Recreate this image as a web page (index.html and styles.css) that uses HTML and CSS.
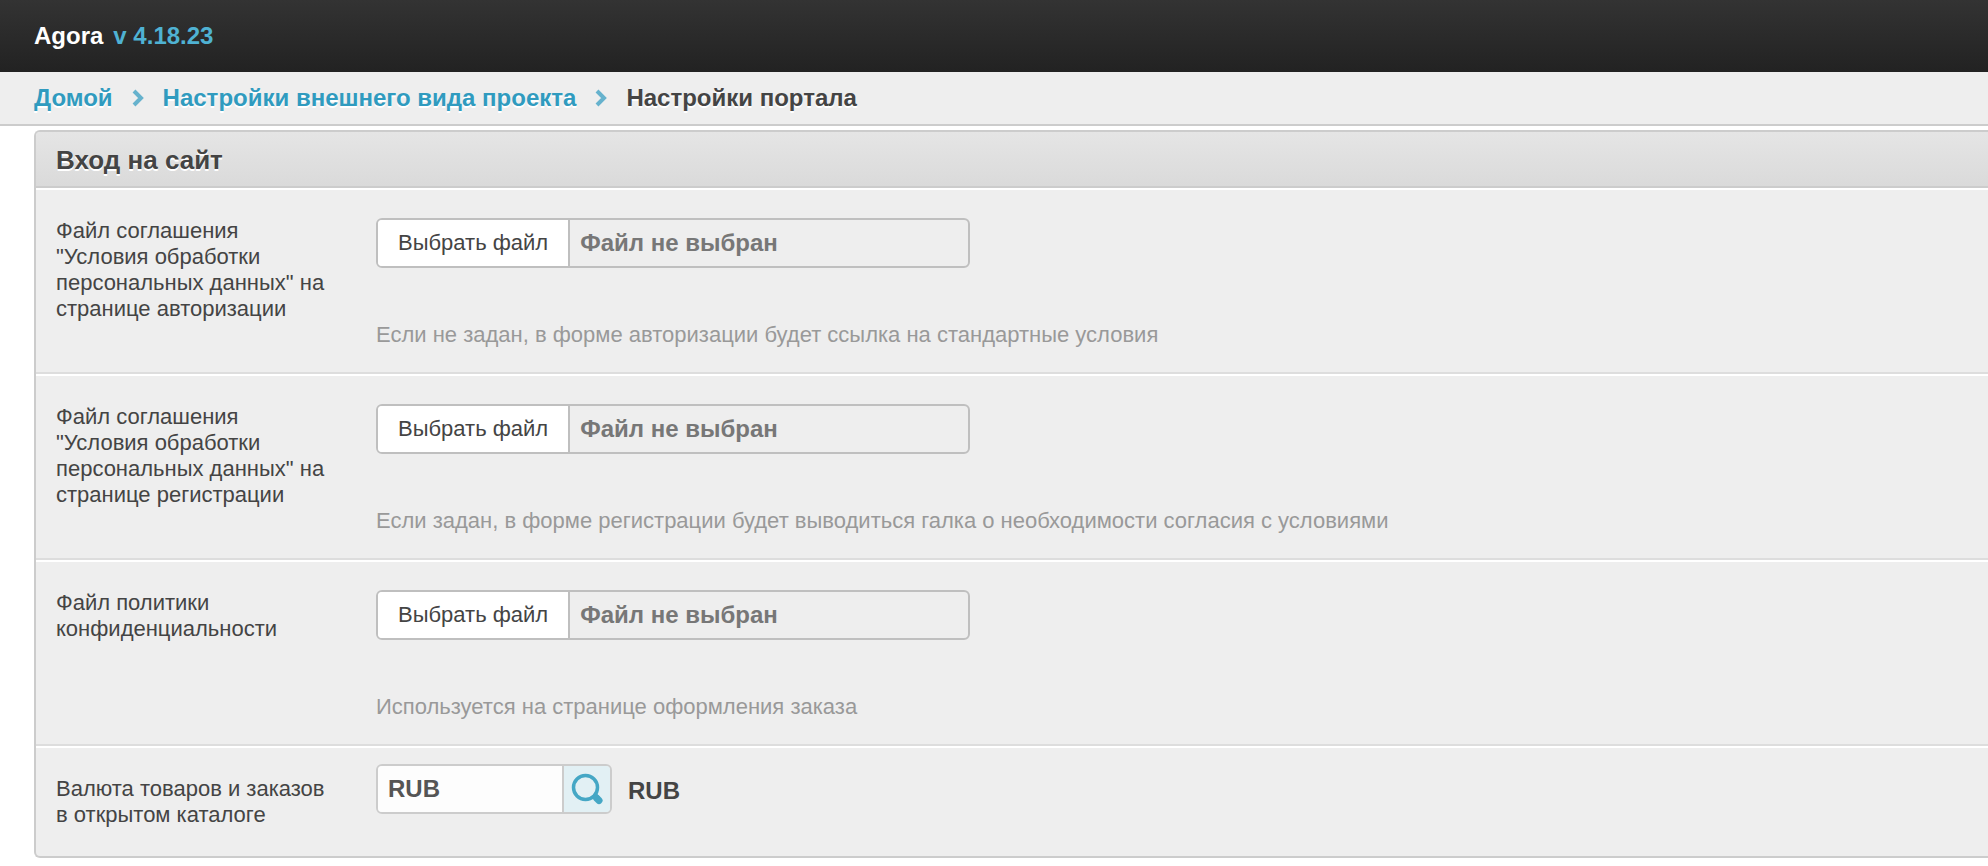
FILE: index.html
```html
<!DOCTYPE html>
<html lang="ru">
<head>
  <meta charset="UTF-8">
  <meta name="viewport" content="width=device-width, initial-scale=1.0">
  <title>Настройки портала</title>
  <link rel="stylesheet" href="styles.css">
</head>
<body>
  <header class="topbar">
    <span class="brand">Agora</span>
    <span class="version">v 4.18.23</span>
  </header>

  <nav class="breadcrumbs">
    <a href="#">Домой</a>
    <svg class="arrow" width="12" height="18" viewBox="0 0 12 18"><path d="M2 2L9 9L2 16"/></svg>
    <a href="#">Настройки внешнего вида проекта</a>
    <svg class="arrow" width="12" height="18" viewBox="0 0 12 18"><path d="M2 2L9 9L2 16"/></svg>
    <span>Настройки портала</span>
  </nav>

  <main class="panel">
    <h2 class="panel-title">Вход на сайт</h2>

    <div class="row">
      <label class="row-label" for="authFile">Файл соглашения "Условия обработки персональных данных" на странице авторизации</label>
      <div class="row-body">
        <label class="file">
          <input type="file" id="authFile">
          <span class="file-button">Выбрать файл</span>
          <span class="file-name">Файл не выбран</span>
        </label>
        <p class="hint">Если не задан, в форме авторизации будет ссылка на стандартные условия</p>
      </div>
    </div>

    <div class="row">
      <label class="row-label" for="registerFile">Файл соглашения "Условия обработки персональных данных" на странице регистрации</label>
      <div class="row-body">
        <label class="file">
          <input type="file" id="registerFile">
          <span class="file-button">Выбрать файл</span>
          <span class="file-name">Файл не выбран</span>
        </label>
        <p class="hint">Если задан, в форме регистрации будет выводиться галка о необходимости согласия с условиями</p>
      </div>
    </div>

    <div class="row">
      <label class="row-label" for="policyFile">Файл политики конфиденциальности</label>
      <div class="row-body">
        <label class="file">
          <input type="file" id="policyFile">
          <span class="file-button">Выбрать файл</span>
          <span class="file-name">Файл не выбран</span>
        </label>
        <p class="hint">Используется на странице оформления заказа</p>
      </div>
    </div>

    <div class="row row-currency">
      <label class="row-label" for="currency">Валюта товаров и заказов в открытом каталоге</label>
      <div class="row-body">
        <div class="lookup">
          <input type="text" id="currency" value="RUB">
          <button type="button" aria-label="Поиск">
            <svg width="32" height="32" viewBox="0 0 32 32">
              <circle cx="14.5" cy="14.5" r="12"/>
              <path class="neck" d="M22.5 21.5L27 26"/>
              <path class="handle" d="M25.5 25L28 27.5"/>
            </svg>
          </button>
        </div>
        <span class="currency-name">RUB</span>
      </div>
    </div>
  </main>
</body>
</html>
```
FILE: styles.css
```css
* {
  box-sizing: border-box;
}

body {
  margin: 0;
  background: #fff;
  color: #444;
  font-family: "Liberation Sans", Arial, sans-serif;
  font-size: 22px;
  line-height: 26px;
}

.topbar {
  display: flex;
  align-items: center;
  gap: 10px;
  height: 72px;
  padding: 0 34px;
  background: linear-gradient(#333, #222);
  font-size: 24px;
  font-weight: bold;
}

.brand {
  color: #fff;
}

.version {
  color: #4fb2d3;
}

.breadcrumbs {
  display: flex;
  align-items: center;
  height: 54px;
  padding: 0 34px;
  background: #eee;
  border-bottom: 2px solid #ccc;
  font-size: 24px;
  font-weight: bold;
  text-shadow: 0 2px 0 #fff;
}

.breadcrumbs a {
  color: #309bbf;
  text-decoration: none;
}

.arrow {
  margin: 0 19px;
  fill: none;
  stroke: #66b2cd;
  stroke-width: 4;
}

/* the panel runs off the right edge of the window */
.panel {
  margin: 4px 0 8px 34px;
  background: #eee;
  border: 2px solid #ccc;
  border-right: none;
  border-radius: 6px 0 0 6px;
  overflow: hidden;
}

.panel-title {
  margin: 0;
  padding: 14px 20px 12px;
  background: linear-gradient(#e5e5e5, #dadada);
  border-bottom: 2px solid #ccc;
  font-size: 26px;
  line-height: 28px;
  text-shadow: 0 2px 0 #fff;
}

.row {
  display: flex;
  gap: 40px;
  padding: 28px 20px 24px;
  border-top: 2px solid #fff;
  border-bottom: 2px solid #ddd;
}

.row-label {
  flex: 0 0 280px;
}

.row-body {
  flex: 1;
}

.file {
  display: flex;
  width: 594px;
  height: 50px;
  border: 2px solid #bfbfbf;
  border-radius: 6px;
  line-height: 46px;
  overflow: hidden;
  cursor: pointer;
}

.file input {
  position: absolute;
  opacity: 0;
  width: 1px;
  height: 1px;
}

.file-button {
  padding: 0 20px;
  background: #fff;
  border-right: 2px solid #bfbfbf;
}

.file-name {
  padding: 0 10px;
  color: #777;
  font-size: 24px;
  font-weight: bold;
}

.hint {
  margin: 54px 0 0;
  color: #999;
}

.row-currency {
  border-bottom: none;
  padding-bottom: 28px;
}

.row-currency .row-body {
  display: flex;
  align-items: center;
  gap: 16px;
  height: 50px;
  margin-top: -12px;
}

.lookup {
  display: flex;
  width: 236px;
  height: 50px;
  border: 2px solid #ccc;
  border-radius: 6px;
  overflow: hidden;
}

.lookup input {
  flex: 1;
  min-width: 0;
  padding: 0 10px;
  background: #fdfdfd;
  border: none;
  color: #555;
  font: bold 24px "Liberation Sans", Arial, sans-serif;
}

.lookup button {
  display: flex;
  align-items: center;
  justify-content: center;
  width: 48px;
  padding: 0;
  background: #e2f0f4;
  border: none;
  border-left: 2px solid #ccc;
  cursor: pointer;
}

.lookup svg {
  fill: none;
  stroke: #45a7c5;
  stroke-width: 3.5;
}

.lookup .neck {
  stroke-width: 6;
}

.lookup .handle {
  stroke-width: 7;
  stroke-linecap: round;
}

.currency-name {
  padding-top: 4px;
  font-size: 24px;
  font-weight: bold;
}
```
